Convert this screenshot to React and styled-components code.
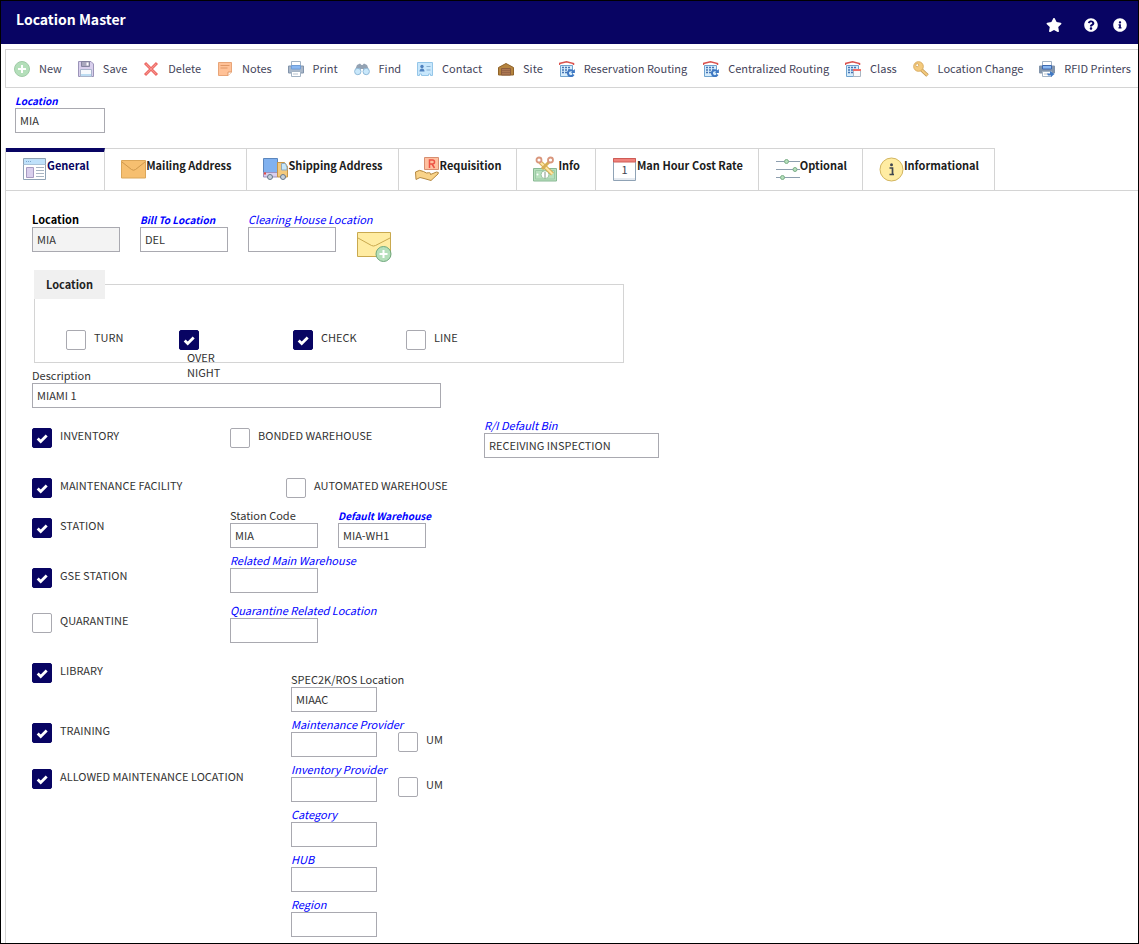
import React, { useId, useState } from "react";
import styled, { createGlobalStyle, css } from "styled-components";
import { FaStar, FaQuestionCircle, FaInfoCircle } from "react-icons/fa";

const navy = "#080463";
const line = "#d4d4d4";
const fieldLine = "#a9a9b0";
const link = "#0000ff";

const GlobalStyle = createGlobalStyle`
  *, *::before, *::after { box-sizing: border-box; }
  body {
    margin: 0;
    background: #fff;
    color: #333;
    font: 11px/15px "Noto Sans CJK SC", "Noto Sans", sans-serif;
  }
  button, input { font: inherit; color: inherit; }
`;

const Page = styled.div`
  min-height: 100vh;
  border: 1px solid #000;
  display: flex;
  flex-direction: column;
  overflow: hidden;
`;

const Header = styled.header`
  height: 43px;
  padding: 0 10px 0 15px;
  background: ${navy};
  color: #fff;
  display: flex;
  justify-content: space-between;
`;

const Title = styled.h1`
  margin: 0;
  font-size: 14px;
  line-height: 36px;
  font-weight: 700;
`;

const HeaderActions = styled.div`
  display: flex;
  align-items: center;
  padding-top: 5px;
`;

const HeaderButton = styled.button`
  display: flex;
  align-items: center;
  justify-content: center;
  padding: 0;
  margin-left: ${(p) => p.$gap}px;
  width: 16px;
  height: 16px;
  border: 0;
  background: none;
`;

const Toolbar = styled.nav`
  margin: 5px 0 0 4px;
  height: 39px;
  padding: 0 7px 0 8px;
  border: 1px solid ${line};
  border-right: 0;
  display: flex;
  align-items: center;
  justify-content: space-between;
  overflow: hidden;
`;

const ToolButton = styled.button`
  flex: none;
  display: flex;
  align-items: center;
  gap: 9px;
  padding: 0;
  border: 0;
  background: none;
  color: #44445a;
  white-space: nowrap;
  svg { flex: none; }
`;

const ToolText = styled.span`
  line-height: 16px;
  padding-bottom: 2px;
`;

const SearchArea = styled.section`
  padding: 5px 14px 15px;
`;

const Tabs = styled.div`
  margin-left: 4px;
  display: flex;
  border-left: 1px solid ${line};
  border-bottom: 1px solid ${line};
`;

const Tab = styled.button`
  flex: none;
  position: relative;
  height: 42px;
  padding: 7px 15px 0 16px;
  border: 0;
  border-top: 1px solid ${line};
  border-right: 1px solid ${line};
  background: #fff;
  color: ${(p) => (p.$active ? navy : "#1c1c1c")};
  font-weight: 700;
  line-height: 18px;
  white-space: nowrap;
  display: flex;
  align-items: flex-start;
  svg { flex: none; }
  ${(p) =>
    p.$active &&
    css`
      padding-top: 4px;
      border-top: 4px solid ${navy};
    `}
`;

const Panel = styled.main`
  flex: 1;
  margin-left: 4px;
  padding: 21px 26px 6px;
  border-left: 1px solid ${line};
`;

const FieldBox = styled.div`
  width: ${(p) => (p.$width ? `${p.$width}px` : "auto")};
  flex: none;
`;

const FieldLabel = styled.label`
  display: block;
  height: 15px;
  white-space: nowrap;
  color: ${(p) => (p.$link ? link : p.$strong ? "#000" : "#333")};
  font-style: ${(p) => (p.$link ? "italic" : "normal")};
  font-size: ${(p) => (p.$link && p.$strong ? 10 : 11)}px;
  font-weight: ${(p) => (p.$strong ? 700 : 400)};
`;

const TextInput = styled.input`
  display: block;
  width: 100%;
  height: 25px;
  padding: 0 4px 2px;
  border: 1px solid ${fieldLine};
  border-radius: 0;
  outline: 0;
  background: ${(p) => (p.readOnly ? "#f3f3f3" : "#fff")};
`;

const Row = styled.div`
  display: flex;
  gap: ${(p) => p.$gap || 20}px;
`;

const MailButton = styled.button`
  align-self: flex-start;
  margin-top: 20px;
  padding: 0;
  border: 0;
  background: none;
  height: 30px;
  svg { display: block; }
`;

const Group = styled.fieldset`
  width: 590px;
  max-width: 100%;
  height: 93px;
  margin: 8px 0 5px 2px;
  padding: 0 0 0 31px;
  border: 1px solid ${line};
  min-width: 0;
`;

const Legend = styled.legend`
  margin-left: -32px;
  padding: 0 12px;
  background: #f0f0f0;
  color: #222;
  font-weight: 700;
  line-height: 29px;
`;

const GroupGrid = styled.div`
  padding-top: 31px;
  height: 51px;
  display: grid;
  grid-template-columns: 113px 114px 113px 113px;
`;

const CheckLabel = styled.label`
  display: flex;
  flex-wrap: ${(p) => (p.$stacked ? "wrap" : "nowrap")};
  align-items: flex-start;
  width: ${(p) => (p.$stacked ? "48px" : "auto")};
  height: 20px;
  white-space: ${(p) => (p.$stacked ? "normal" : "nowrap")};
`;

const CheckText = styled.span`
  margin-left: 8px;
`;

const CheckCell = styled.span`
  display: grid;
  flex: none;
  width: 20px;
  height: 20px;
  place-items: center;
  > * { grid-area: 1 / 1; }
  svg { pointer-events: none; }
`;

const CheckInput = styled.input`
  appearance: none;
  margin: 0;
  width: 20px;
  height: 20px;
  border: 1px solid ${fieldLine};
  border-radius: 2px;
  background: #fff;
  &:checked { background: ${navy}; border-color: ${navy}; }
`;

const Details = styled.div`
  margin-top: 10px;
  display: grid;
  grid-template-columns: 198px 254px 175px;
`;

const CheckColumn = styled.div`
  padding-top: 10px;
  display: flex;
  flex-direction: column;
`;

const CheckRow = styled.div`
  height: ${(p) => p.$height}px;
`;

const Stack = styled.div`
  display: flex;
  flex-direction: column;
  gap: 5px;
  padding-left: ${(p) => p.$indent || 0}px;
  margin-top: ${(p) => p.$top || 0}px;
`;

const BesideField = styled.div`
  padding-top: 15px;
`;

function Field({ label, value = "", width, link: isLink, strong, readOnly }) {
  const id = useId();
  return (
    <FieldBox $width={width}>
      <FieldLabel htmlFor={id} $link={isLink} $strong={strong}>{label}</FieldLabel>
      <TextInput id={id} type="text" defaultValue={value} readOnly={readOnly} />
    </FieldBox>
  );
}

function Check({ label, on = false, stacked }) {
  const [checked, setChecked] = useState(on);
  return (
    <CheckLabel $stacked={stacked}>
      <CheckCell>
        <CheckInput type="checkbox" checked={checked} onChange={(e) => setChecked(e.target.checked)} />
        {checked && (
          <svg width="20" height="20" viewBox="0 0 20 20" fill="none" stroke="#fff" strokeWidth="2.8">
            <path d="M5.7 10.6l3 3 6-6" />
          </svg>
        )}
      </CheckCell>
      <CheckText>{label}</CheckText>
    </CheckLabel>
  );
}

const Svg16 = (p) => <svg width="16" height="16" viewBox="0 0 16 16" fill="none" {...p} />;

const Building = ({ children }) => (
  <Svg16>
    <path d="M1.500 4.500h12v11h-12z" fill="#d6ecfb" stroke="#6fa3cf" />
    <path d="M0.500 4V2.500L7.500.8l7 1.700V4" stroke="#d9534f" strokeWidth="1.500" />
    <path d="M3 6.500h9M3 9h9M3 11.500h7" stroke="#4674b5" strokeWidth="1.500" strokeDasharray="2 1" />
    {children}
  </Svg16>
);

const RoutingIcon = () => (
  <Building>
    <path d="M14.300 10.300a3 3 0 1 0 .3 3.200" stroke="#3f78c3" strokeWidth="2" />
    <path d="M15.900 8v4h-4z" fill="#3f78c3" />
  </Building>
);

const Printer = ({ rfid }) => (
  <Svg16>
    <path d="M3.500.5h9V5h-9z" fill="#fff" stroke="#a3b3c4" />
    <path d="M.5 5h15v7H.5z" fill={rfid ? "#8495aa" : "#a9b7c9"} stroke="#8294ab" />
    <path d="M3.500 4.500h9V8h-9z" fill="#8ab8f2" stroke={rfid ? "#3e69b0" : "#719ed8"} />
    <path d="M3.500 10.500h9v5h-9z" fill="#fff" stroke="#a3b3c4" />
    <path d="M5 13h5" stroke="#b9c4d0" />
    {rfid && <path d="M8 12.500h3V10l4.500 3-3.500 3v-1.500H9z" fill="#3f78c3" />}
  </Svg16>
);

const tools = [
  ["New", <Svg16><circle cx="8" cy="8" r="7.500" fill="#b4dfba" stroke="#9fcaa6" /><path d="M8 4v8M4 8h8" stroke="#fff" strokeWidth="2" /></Svg16>],
  ["Save", <Svg16><path d="M.5.5H13L15.500 3v12.500H.5z" fill="#d9cfed" stroke="#9b94b8" /><path d="M3.500.5h8v5h-8z" fill="#a9a7bd" stroke="#8584a0" /><path d="M8.500 1.500h2v3h-2z" fill="#fff" /><path d="M2.500 8.500h11v7h-11z" fill="#f6f9fd" stroke="#a9b4cb" /><path d="M3 14h10" stroke="#bcdcf2" strokeWidth="2" /></Svg16>],
  ["Delete", <Svg16><path d="M2 2l12 12M14 2L2 14" stroke="#ee6d68" strokeWidth="3" /><path d="M3 3l10 10M13 3L3 13" stroke="#f5928c" /></Svg16>],
  ["Notes", <Svg16><path d="M1.500 1.500h13v9.500l-3.500 3.500h-9.500z" fill="#ffc197" stroke="#e8a578" /><path d="M14.500 11H11v3.500" fill="#fff" stroke="#df9766" /><path d="M3.500 4.500h9M3.500 7h7" stroke="#df9766" /></Svg16>],
  ["Print", <Printer />],
  ["Find", <Svg16><path d="M1 9l2-5 3-1.500L7.500 4h1L10 2.500 13 4l2 5-5 2-1-3H7l-1 3z" fill="#93a2b3" /><circle cx="3.800" cy="10.500" r="3.200" fill="#c9e8fb" stroke="#91bad8" /><circle cx="12.200" cy="10.500" r="3.200" fill="#c9e8fb" stroke="#91bad8" /></Svg16>],
  ["Contact", <Svg16><path d="M.5 1.500h15v13h-2v-1.500h-2v1.500h-7v-1.500h-2v1.500h-2z" fill="#c8e7fc" stroke="#95c6e8" /><circle cx="5" cy="5.500" r="1.700" fill="#4f81be" /><path d="M2.500 10.500c0-4 5-4 5 0z" fill="#4f81be" /><path d="M9.500 5.500h4M9.500 9h4" stroke="#87aed1" /></Svg16>],
  ["Site", <Svg16><path d="M.5 6.500L8 2.500l7.500 4v7.500H.5z" fill="#b5843f" stroke="#906329" /><path d="M3.500 7.500h9V14h-9z" fill="#ab7651" stroke="#8c5d3c" /><path d="M4 9.500h8M4 11.500h8" stroke="#976547" /></Svg16>],
  ["Reservation Routing", <RoutingIcon />],
  ["Centralized Routing", <RoutingIcon />],
  ["Class", <Building><path d="M8.500 8.500h7v7h-7z" fill="#f8fafc" stroke="#a9b5c2" /><path d="M8 9h8" stroke="#ee6d68" strokeWidth="2" /></Building>],
  ["Location Change", <Svg16><path d="M7.800 8.200l6.700 6.300" stroke="#bd9553" strokeWidth="3.500" /><path d="M7.800 8.200l6.500 6" stroke="#f4ca7d" strokeWidth="2" /><circle cx="5.500" cy="5.500" r="4.800" fill="#f4ca7d" stroke="#d9ac61" /><circle cx="4.200" cy="4.200" r="1.500" fill="#fff" stroke="#d9ac61" /></Svg16>],
  ["RFID Printers", <Printer rfid />],
];

const Svg26 = (p) => <svg width="25" height="26" viewBox="0 0 25 26" fill="none" {...p} />;

const tabs = [
  ["General", <Svg26><path d="M1.500 2.500h22v21h-22z" fill="#fff" stroke="#8fa2b5" /><path d="M2 3h21v5H2z" fill="#bfe1fa" /><path d="M4 5.500h6" stroke="#7da9cf" strokeDasharray="1 1" /><path d="M1.500 8.500h22" stroke="#a9c3d8" /><path d="M4.500 11.500h7v10h-7z" fill="#d9cfed" stroke="#a79bc2" /><path d="M14 11.500h8M14 14.500h8M14 17.500h8M14 20.500h8" stroke="#a9b5c2" /></Svg26>],
  ["Mailing Address", <Svg26><path d="M.5 4.500h24v17.500H.5z" fill="#f6bf70" stroke="#dba659" /><path d="M1 6l9.500 7.500q2 1.500 4 0L24 6" stroke="#cf984c" /></Svg26>],
  ["Shipping Address", <Svg26><path d="M.5 2.500h14v15H.5z" fill="#80b1ef" stroke="#5b86bd" /><path d="M.5 16.500h14V21H.5z" fill="#d9cfed" stroke="#9d91bd" /><path d="M14.500 6.500h7l3 4V21H14.500z" fill="#f4ca7d" stroke="#c59547" /><path d="M18.500 7.500h4l1.500 4V14h-5.500z" fill="#c6e7fb" stroke="#90a9bd" /><path d="M1 17.500h2" stroke="#e14b45" strokeWidth="2" /><circle cx="7" cy="21" r="2.500" fill="#c5d0dc" stroke="#66788a" /><circle cx="20" cy="21" r="2.500" fill="#c5d0dc" stroke="#66788a" /></Svg26>],
  ["Requisition", <Svg26><path d="M9.500 1.500h14v12h-14z" fill="#ffc0a0" stroke="#d78e70" /><path d="M14.500 12V4h3q2 0 2 2t-2 2h-3M17 8l2.500 4" stroke="#ed5144" strokeWidth="1.500" /><path d="M.5 16q4-3 8-.5l3 1.500q5-1 4 1.500l6-2.500q3 0 1.500 2L16 24.500l-7-2-4-1-4 2z" fill="#f9d389" stroke="#b48842" /></Svg26>],
  ["Info", <Svg26><path d="M.5 12.500h23v12.500H.5z" fill="#b8e0bd" stroke="#88b893" /><path d="M2.500 14.500h19v8.500h-19z" stroke="#9ccaa5" /><circle cx="12" cy="18.700" r="4" fill="#fff" stroke="#9ac4a0" /><circle cx="4.500" cy="18.500" r="1" fill="#fff" /><path d="M12 16v6" stroke="#829486" /><path d="M7 6l12.500 12" stroke="#d7ae54" strokeWidth="4" /><path d="M7 6l12.500 12" stroke="#ffe6a3" strokeWidth="2" /><path d="M16 6l-7 7" stroke="#d7ae54" strokeWidth="3" /><circle cx="6" cy="4" r="2.500" fill="#fff" stroke="#d9967c" strokeWidth="1.800" /><circle cx="17.500" cy="4" r="2.500" fill="#fff" stroke="#d9967c" strokeWidth="1.800" /></Svg26>],
  ["Man Hour Cost Rate", <Svg26><path d="M1.500 2.500h22v22h-22z" fill="#fff" stroke="#8fa2b5" /><path d="M2 22h21v2H2z" fill="#e5eaf0" /><path d="M1.500 2.500h22v3.500h-22z" fill="#ef827c" stroke="#cf5b55" /><text x="12.500" y="18" textAnchor="middle" fontSize="11" fontWeight="400" fill="#3d4652">1</text></Svg26>],
  ["Optional", <Svg26><path d="M1 5.500h24M1 13.500h24M1 21.500h24" stroke="#8d9eae" /><circle cx="11.500" cy="5.500" r="2" fill="#b4dfba" stroke="#7cae88" /><circle cx="20" cy="13.500" r="2" fill="#b4dfba" stroke="#7cae88" /><circle cx="7.500" cy="21.500" r="2" fill="#b4dfba" stroke="#7cae88" /></Svg26>],
  ["Informational", <Svg26><circle cx="12.500" cy="13.500" r="11.500" fill="#ffeca2" stroke="#d2b560" /><circle cx="12.500" cy="8.800" r="1.500" fill="#414750" /><path d="M10.500 12h3v6M10.500 18.500h4.500" stroke="#414750" strokeWidth="1.700" /></Svg26>],
];

const functions = [
  ["INVENTORY", true, 50],
  ["MAINTENANCE FACILITY", true, 40],
  ["STATION", true, 50],
  ["GSE STATION", true, 45],
  ["QUARANTINE", false, 50],
  ["LIBRARY", true, 60],
  ["TRAINING", true, 46],
  ["ALLOWED MAINTENANCE LOCATION", true, 20],
];

export default function App() {
  const [active, setActive] = useState("General");
  return (
    <Page>
      <GlobalStyle />
      <Header>
        <Title>Location Master</Title>
        <HeaderActions>
          <HeaderButton aria-label="Favorite" $gap={0}><FaStar size={16} /></HeaderButton>
          <HeaderButton aria-label="Help" $gap={21}><FaQuestionCircle size={14} /></HeaderButton>
          <HeaderButton aria-label="Information" $gap={13}><FaInfoCircle size={14} /></HeaderButton>
        </HeaderActions>
      </Header>
      <Toolbar>
        {tools.map(([label, icon]) => (
          <ToolButton key={label}>
            {icon}
            <ToolText>{label}</ToolText>
          </ToolButton>
        ))}
      </Toolbar>
      <SearchArea>
        <Field label="Location" value="MIA" width={90} link strong />
      </SearchArea>
      <Tabs role="tablist">
        {tabs.map(([label, icon]) => (
          <Tab key={label} role="tab" aria-selected={active === label} $active={active === label} onClick={() => setActive(label)}>
            {icon}
            {label}
          </Tab>
        ))}
      </Tabs>
      <Panel>
        <Row>
          <Field label="Location" value="MIA" width={88} strong readOnly />
          <Field label="Bill To Location" value="DEL" width={88} link strong />
          <Field label="Clearing House Location" width={88} link />
          <MailButton aria-label="Add mail address">
            <svg width="36" height="30" viewBox="0 0 36 30" fill="none">
              <path d="M1.500.5h33v24h-33z" fill="#ffeca2" stroke="#c9a94f" />
              <path d="M2 6l13.500 7.500q2 1 4 0L34 6" stroke="#c9a94f" />
              <circle cx="27.500" cy="22" r="7.500" fill="#b4dfba" stroke="#6fa77c" />
              <path d="M27.500 18v8M23.500 22h8" stroke="#fff" strokeWidth="2" />
            </svg>
          </MailButton>
        </Row>
        <Group>
          <Legend>Location</Legend>
          <GroupGrid>
            <Check label="TURN" />
            <Check label="OVER NIGHT" on stacked />
            <Check label="CHECK" on />
            <Check label="LINE" />
          </GroupGrid>
        </Group>
        <Field label="Description" value="MIAMI 1" width={409} />
        <Details>
          <CheckColumn>
            {functions.map(([label, on, height]) => (
              <CheckRow key={label} $height={height}>
                <Check label={label} on={on} />
              </CheckRow>
            ))}
          </CheckColumn>
          <div>
            <Stack $top={10}>
              <Check label="BONDED WAREHOUSE" />
            </Stack>
            <Stack $top={30} $indent={56}>
              <Check label="AUTOMATED WAREHOUSE" />
            </Stack>
            <Stack $top={10}>
              <Row>
                <Field label="Station Code" value="MIA" width={88} />
                <Field label="Default Warehouse" value="MIA-WH1" width={88} link strong />
              </Row>
              <Field label="Related Main Warehouse" width={88} link />
            </Stack>
            <Stack $top={10}>
              <Field label="Quarantine Related Location" width={88} link />
            </Stack>
            <Stack $top={29} $indent={61}>
              <Field label="SPEC2K/ROS Location" value="MIAAC" width={86} />
              <Row $gap={21}>
                <Field label="Maintenance Provider" width={86} link />
                <BesideField><Check label="UM" /></BesideField>
              </Row>
              <Row $gap={21}>
                <Field label="Inventory Provider" width={86} link />
                <BesideField><Check label="UM" /></BesideField>
              </Row>
              <Field label="Category" width={86} link />
              <Field label="HUB" width={86} link />
              <Field label="Region" width={86} link />
            </Stack>
          </div>
          <Field label="R/I Default Bin" value="RECEIVING INSPECTION" width={175} link />
        </Details>
      </Panel>
    </Page>
  );
}
